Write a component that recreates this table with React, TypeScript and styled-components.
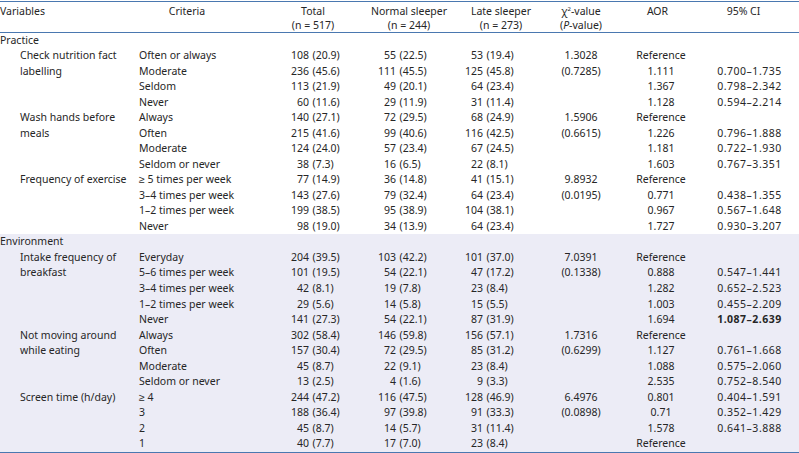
import React from 'react';
import styled, { createGlobalStyle } from 'styled-components';

const GlobalStyle = createGlobalStyle`
    html, body {
        margin: 0;
        padding: 0;
        background: #ffffff;
    }
    body {
        font-family: 'Noto Sans', 'Liberation Sans', sans-serif;
        font-size: 10.5px;
        color: #262626;
    }
`;

const LINE = 15.54;
const RULE = '#4a78b0';
const DATA_COLS = '122px 112px 86px 92px 68px 85px 99px';

const Frame = styled.div`
    width: 799px;
    margin-top: 1px;
    border-top: 1.5px solid ${RULE};
    border-bottom: 1.5px solid ${RULE};
`;

const HeadRow = styled.div`
    display: grid;
    grid-template-columns: 135px ${DATA_COLS};
    height: 29.5px;
    border-bottom: 1px solid ${RULE};
`;

const HeadCell = styled.div<{ $align?: string; $shift?: number }>`
    text-align: ${(p) => p.$align || 'center'};
    line-height: 14px;
    padding-top: 1.5px;
    padding-left: ${(p) => (p.$shift && p.$shift > 0 ? p.$shift * 2 : 0)}px;
    padding-right: ${(p) => (p.$shift && p.$shift < 0 ? -p.$shift * 2 : 0)}px;
    white-space: nowrap;
`;

const Sup = styled.sup`
    font-size: 6px;
    line-height: 0;
    vertical-align: 4px;
`;

const Section = styled.div<{ $shade?: boolean }>`
    background: ${(p) => (p.$shade ? '#ececf6' : 'transparent')};
`;

const SectionTitle = styled.div`
    height: ${LINE}px;
    line-height: ${LINE}px;
`;

const Group = styled.div`
    display: grid;
    grid-template-columns: 135px 1fr;
`;

const GroupLabel = styled.div`
    padding: 0 4px 0 20px;
    line-height: ${LINE}px;
`;

const DataRow = styled.div`
    display: grid;
    grid-template-columns: ${DATA_COLS};
    height: ${LINE}px;
    line-height: ${LINE}px;
    white-space: nowrap;
`;

const Cell = styled.div<{ $align?: string; $pad?: number; $bold?: boolean; $spread?: boolean }>`
    padding-left: ${(p) => p.$pad || 0}px;
    text-align: ${(p) => p.$align || 'center'};
    font-weight: ${(p) => (p.$bold ? 700 : 400)};
    letter-spacing: ${(p) => (p.$spread ? '0.5px' : 'normal')};
`;

const Num = styled.span<{ $w: number }>`
    display: inline-block;
    width: ${(p) => p.$w}px;
    text-align: right;
`;

const Pct = styled.span`
    margin-left: 3.5px;
`;

type Item = {
    crit: string;
    total: [string, string];
    normal: [string, string];
    late: [string, string];
    chi?: string;
    aor: string;
    ci?: string;
    bold?: boolean;
};

type GroupData = { label: string; items: Item[] };

type SectionData = { title: string; shade?: boolean; groups: GroupData[] };

const sections: SectionData[] = [
    {
        title: 'Practice',
        groups: [
            {
                label: 'Check nutrition fact labelling',
                items: [
                    { crit: 'Often or always', total: ['108', '(20.9)'], normal: ['55', '(22.5)'], late: ['53', '(19.4)'], chi: '1.3028', aor: 'Reference' },
                    { crit: 'Moderate', total: ['236', '(45.6)'], normal: ['111', '(45.5)'], late: ['125', '(45.8)'], chi: '(0.7285)', aor: '1.111', ci: '0.700–1.735' },
                    { crit: 'Seldom', total: ['113', '(21.9)'], normal: ['49', '(20.1)'], late: ['64', '(23.4)'], aor: '1.367', ci: '0.798–2.342' },
                    { crit: 'Never', total: ['60', '(11.6)'], normal: ['29', '(11.9)'], late: ['31', '(11.4)'], aor: '1.128', ci: '0.594–2.214' },
                ],
            },
            {
                label: 'Wash hands before meals',
                items: [
                    { crit: 'Always', total: ['140', '(27.1)'], normal: ['72', '(29.5)'], late: ['68', '(24.9)'], chi: '1.5906', aor: 'Reference' },
                    { crit: 'Often', total: ['215', '(41.6)'], normal: ['99', '(40.6)'], late: ['116', '(42.5)'], chi: '(0.6615)', aor: '1.226', ci: '0.796–1.888' },
                    { crit: 'Moderate', total: ['124', '(24.0)'], normal: ['57', '(23.4)'], late: ['67', '(24.5)'], aor: '1.181', ci: '0.722–1.930' },
                    { crit: 'Seldom or never', total: ['38', '(7.3)'], normal: ['16', '(6.5)'], late: ['22', '(8.1)'], aor: '1.603', ci: '0.767–3.351' },
                ],
            },
            {
                label: 'Frequency of exercise',
                items: [
                    { crit: '≥ 5 times per week', total: ['77', '(14.9)'], normal: ['36', '(14.8)'], late: ['41', '(15.1)'], chi: '9.8932', aor: 'Reference' },
                    { crit: '3–4 times per week', total: ['143', '(27.6)'], normal: ['79', '(32.4)'], late: ['64', '(23.4)'], chi: '(0.0195)', aor: '0.771', ci: '0.438–1.355' },
                    { crit: '1–2 times per week', total: ['199', '(38.5)'], normal: ['95', '(38.9)'], late: ['104', '(38.1)'], aor: '0.967', ci: '0.567–1.648' },
                    { crit: 'Never', total: ['98', '(19.0)'], normal: ['34', '(13.9)'], late: ['64', '(23.4)'], aor: '1.727', ci: '0.930–3.207' },
                ],
            },
        ],
    },
    {
        title: 'Environment',
        shade: true,
        groups: [
            {
                label: 'Intake frequency of breakfast',
                items: [
                    { crit: 'Everyday', total: ['204', '(39.5)'], normal: ['103', '(42.2)'], late: ['101', '(37.0)'], chi: '7.0391', aor: 'Reference' },
                    { crit: '5–6 times per week', total: ['101', '(19.5)'], normal: ['54', '(22.1)'], late: ['47', '(17.2)'], chi: '(0.1338)', aor: '0.888', ci: '0.547–1.441' },
                    { crit: '3–4 times per week', total: ['42', '(8.1)'], normal: ['19', '(7.8)'], late: ['23', '(8.4)'], aor: '1.282', ci: '0.652–2.523' },
                    { crit: '1–2 times per week', total: ['29', '(5.6)'], normal: ['14', '(5.8)'], late: ['15', '(5.5)'], aor: '1.003', ci: '0.455–2.209' },
                    { crit: 'Never', total: ['141', '(27.3)'], normal: ['54', '(22.1)'], late: ['87', '(31.9)'], aor: '1.694', ci: '1.087–2.639', bold: true },
                ],
            },
            {
                label: 'Not moving around while eating',
                items: [
                    { crit: 'Always', total: ['302', '(58.4)'], normal: ['146', '(59.8)'], late: ['156', '(57.1)'], chi: '1.7316', aor: 'Reference' },
                    { crit: 'Often', total: ['157', '(30.4)'], normal: ['72', '(29.5)'], late: ['85', '(31.2)'], chi: '(0.6299)', aor: '1.127', ci: '0.761–1.668' },
                    { crit: 'Moderate', total: ['45', '(8.7)'], normal: ['22', '(9.1)'], late: ['23', '(8.4)'], aor: '1.088', ci: '0.575–2.060' },
                    { crit: 'Seldom or never', total: ['13', '(2.5)'], normal: ['4', '(1.6)'], late: ['9', '(3.3)'], aor: '2.535', ci: '0.752–8.540' },
                ],
            },
            {
                label: 'Screen time (h/day)',
                items: [
                    { crit: '≥ 4', total: ['244', '(47.2)'], normal: ['116', '(47.5)'], late: ['128', '(46.9)'], chi: '6.4976', aor: '0.801', ci: '0.404–1.591' },
                    { crit: '3', total: ['188', '(36.4)'], normal: ['97', '(39.8)'], late: ['91', '(33.3)'], chi: '(0.0898)', aor: '0.71', ci: '0.352–1.429' },
                    { crit: '2', total: ['45', '(8.7)'], normal: ['14', '(5.7)'], late: ['31', '(11.4)'], aor: '1.578', ci: '0.641–3.888' },
                    { crit: '1', total: ['40', '(7.7)'], normal: ['17', '(7.0)'], late: ['23', '(8.4)'], aor: 'Reference' },
                ],
            },
        ],
    },
];

const Count = ({ v, w }: { v: [string, string]; w: number }) => (
    <Cell $align="left">
        <Num $w={w}>{v[0]}</Num>
        <Pct>{v[1]}</Pct>
    </Cell>
);

export default function App() {
    return (
        <>
            <GlobalStyle />
            <Frame>
                <HeadRow>
                    <HeadCell $align="left">Variables</HeadCell>
                    <HeadCell $shift={-9}>Criteria</HeadCell>
                    <HeadCell>
                        Total
                        <br />
                        (n = 517)
                    </HeadCell>
                    <HeadCell $shift={-3}>
                        Normal sleeper
                        <br />
                        (n = 244)
                    </HeadCell>
                    <HeadCell>
                        Late sleeper
                        <br />
                        (n = 273)
                    </HeadCell>
                    <HeadCell>
                        χ<Sup>2</Sup>-value
                        <br />(<i>P</i>-value)
                    </HeadCell>
                    <HeadCell>AOR</HeadCell>
                    <HeadCell $shift={-6}>95% CI</HeadCell>
                </HeadRow>
                {sections.map((s) => (
                    <Section $shade={s.shade} key={s.title}>
                        <SectionTitle>{s.title}</SectionTitle>
                        {s.groups.map((g) => (
                            <Group key={g.label}>
                                <GroupLabel>{g.label}</GroupLabel>
                                <div>
                                    {g.items.map((it) => (
                                        <DataRow key={it.crit}>
                                            <Cell $align="left" $pad={4}>
                                                {it.crit}
                                            </Cell>
                                            <Count v={it.total} w={52} />
                                            <Count v={it.normal} w={27} />
                                            <Count v={it.late} w={28} />
                                            <Cell>{it.chi}</Cell>
                                            <Cell $pad={7}>{it.aor}</Cell>
                                            <Cell $bold={it.bold} $spread>
                                                {it.ci}
                                            </Cell>
                                        </DataRow>
                                    ))}
                                </div>
                            </Group>
                        ))}
                    </Section>
                ))}
            </Frame>
        </>
    );
}
